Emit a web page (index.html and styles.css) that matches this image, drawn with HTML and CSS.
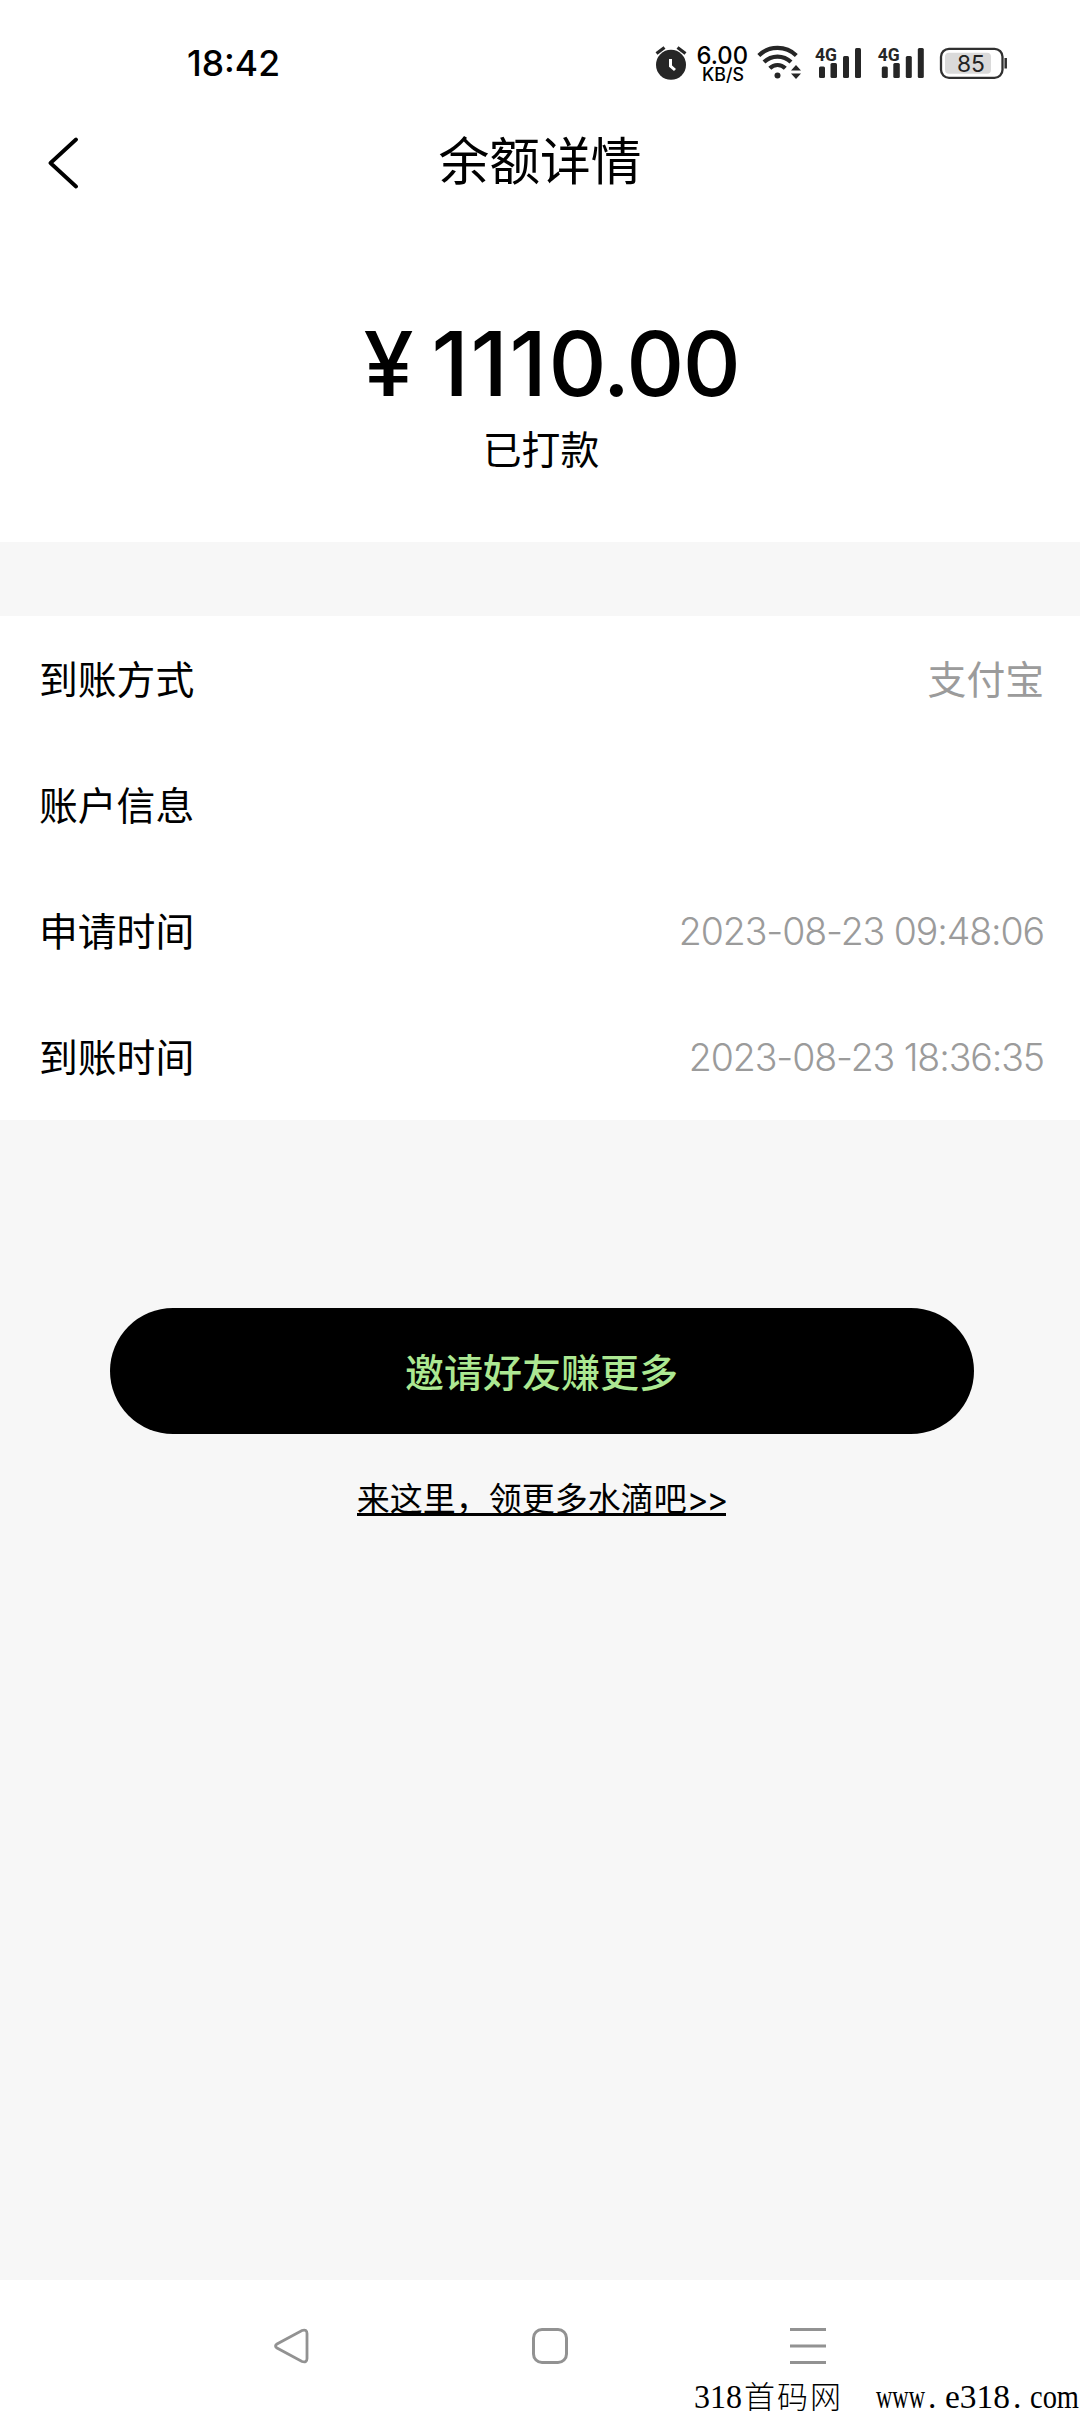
FILE: index.html
```html
<!DOCTYPE html>
<html lang="zh-CN">
<head>
<meta charset="utf-8">
<title>余额详情</title>
<link rel="stylesheet" href="styles.css">
</head>
<body>
<div class="screen">
  <div class="status-bar">
    <span class="clock">18:42</span>
    <svg class="status-icons" width="380" height="70" viewBox="0 0 380 70">
      <g fill="#262626">
        <circle cx="31" cy="34.8" r="15"/>
        <path d="M16.5 23.5l8-6M45.500 23.500l-8-6" stroke="#262626" stroke-width="3.200"/>
        <path d="M30.500 29v7l4.500 4" fill="none" stroke="#fff" stroke-width="3"/>
        <circle cx="137.500" cy="45.500" r="3"/>
        <g fill="none" stroke="#262626" stroke-width="4.200">
          <path d="M118.800 25.500a27 27 0 0 1 37.500 0"/>
          <path d="M124 32a19.500 19.500 0 0 1 27 0"/>
          <path d="M129.800 38.200a11 11 0 0 1 15.500 0"/>
        </g>
        <path d="M151 40.500l5-5.500 5 5.500zM151 43.500l5 5.500 5-5.500z"/>
        <g id="signal">
          <rect x="179" y="36.500" width="6" height="11.500" rx="1.500"/>
          <rect x="190.500" y="33" width="6.500" height="15" rx="1.500"/>
          <rect x="203" y="26" width="6" height="22" rx="1.500"/>
          <rect x="215" y="18" width="6" height="30" rx="1.500"/>
          <text class="network" x="175" y="31" textLength="22" lengthAdjust="spacingAndGlyphs">4G</text>
        </g>
        <use href="#signal" x="62.800"/>
      </g>
      <text class="speed" x="56.500" y="34" textLength="51.500" lengthAdjust="spacingAndGlyphs">6.00</text>
      <text class="unit" x="62" y="51" textLength="42" lengthAdjust="spacingAndGlyphs">KB/S</text>
      <rect x="301" y="18.800" width="61.500" height="29" rx="8" fill="#fff" stroke="#303030" stroke-width="2.300"/>
      <rect x="305" y="22.800" width="46" height="21" rx="4" fill="#dadada"/>
      <path d="M365.700 28v10.500" stroke="#303030" stroke-width="2.500"/>
      <text class="battery" x="317" y="41.500" textLength="28" lengthAdjust="spacingAndGlyphs">85</text>
    </svg>
  </div>
  <header class="header">
    <svg class="back" width="32" height="56" viewBox="0 0 32 56"><path d="M28 4.500L2.500 28 28 51.500" fill="none" stroke="#000" stroke-width="3.800" stroke-linecap="round" stroke-linejoin="round"/></svg>
    <h1 class="title">余额详情</h1>
  </header>
  <section class="summary">
    <div class="amount"><span class="currency">¥</span><span class="value"><span class="ones">111</span><span class="zeros">0.00</span></span></div>
    <div class="state">已打款</div>
  </section>
  <section class="details">
    <div class="row"><span>到账方式</span><span class="info">支付宝</span></div>
    <div class="row"><span>账户信息</span></div>
    <div class="row"><span>申请时间</span><span class="info date">2023-08-23 09:48:06</span></div>
    <div class="row"><span>到账时间</span><span class="info date">2023-08-23 18:36:35</span></div>
  </section>
  <main class="actions">
    <div class="invite">邀请好友赚更多</div>
    <div class="more">来这里，领更多水滴吧<span class="arrows">&gt;&gt;</span></div>
  </main>
  <nav class="nav">
    <svg width="36" height="38" viewBox="0 0 36 38"><path d="M3 17Q0 19 3 21L28 34.500Q33 36 33 31.500V6.500Q33 2 28 3.500Z" fill="none" stroke="#929292" stroke-width="2.800"/></svg>
    <svg width="36" height="36" viewBox="0 0 36 36"><rect x="1.500" y="1.500" width="33" height="33" rx="8.500" fill="none" stroke="#929292" stroke-width="3"/></svg>
    <svg width="36" height="36" viewBox="0 0 36 36"><path d="M0 1.500h36M0 18h36M0 34.500h36" stroke="#929292" stroke-width="3"/></svg>
  </nav>
  <svg class="watermark" width="390" height="36" viewBox="0 0 390 36">
    <text x="4" y="32" textLength="48" lengthAdjust="spacingAndGlyphs">318</text>
    <text class="site-name" x="54" y="32" textLength="97">首码网</text>
    <text x="186" y="32" textLength="49" lengthAdjust="spacingAndGlyphs">www</text>
    <text x="238" y="32">.</text>
    <text x="255" y="32" textLength="65" lengthAdjust="spacingAndGlyphs">e318</text>
    <text x="323" y="32">.</text>
    <text x="340" y="32" textLength="49" lengthAdjust="spacingAndGlyphs">com</text>
  </svg>
</div>
</body>
</html>
```
FILE: styles.css
```css
* { box-sizing: border-box; }
body { margin: 0; background: #f7f7f7; }
.screen {
  position: relative;
  display: flex;
  flex-direction: column;
  width: 1080px;
  height: 2412px;
  overflow: hidden;
  color: #000;
  font-family: Inter, "Noto Sans CJK SC", sans-serif;
  font-size: 38.8px;
}
.status-bar {
  display: flex;
  justify-content: space-between;
  align-items: center;
  height: 128px;
  padding: 2px 60px 0 187px;
  background: #fff;
}
.clock { padding-bottom: 3px; font-size: 35.5px; font-weight: 500; line-height: 44px; }
.speed { font: 500 24px Inter, sans-serif; }
.unit { font: 500 18px Inter, sans-serif; }
.network { font: 700 19px "Roboto", sans-serif; }
.battery { font: 400 23px Inter, sans-serif; fill: #222; }
.header {
  display: grid;
  grid-template-columns: 100px 1fr 100px;
  align-items: center;
  height: 68px;
  background: #fff;
}
.back { margin: 2px 0 0 48px; }
.title {
  margin: 0;
  font-size: 50.8px;
  font-weight: 400;
  line-height: 68px;
  text-align: center;
}
.summary {
  display: flex;
  flex-direction: column;
  align-items: center;
  height: 346px;
  padding-top: 113px;
  background: #fff;
}
.amount {
  display: flex;
  gap: 18px;
  padding-left: 23px;
  font-size: 90px;
  font-weight: 500;
  line-height: 110px;
}
.ones { letter-spacing: 1.6px; }
.zeros { letter-spacing: -1.4px; }
.state { padding-left: 2px; line-height: 61px; }
.details { margin-top: 74px; padding: 0 36px 0 39px; background: #fff; }
.row {
  display: flex;
  justify-content: space-between;
  align-items: center;
  height: 126px;
  padding-bottom: 4px;
}
.info { color: #9b9b9b; }
.date {
  padding-top: 4px;
  font-size: 37.5px;
  font-weight: 300;
  letter-spacing: -1.1px;
}
.actions {
  display: flex;
  flex: 1;
  flex-direction: column;
  align-items: center;
  gap: 40px;
  padding: 188px 0 0 3px;
}
.invite {
  width: 864px;
  height: 126px;
  border-radius: 63px;
  background: #000;
  color: #ace892;
  font-size: 39px;
  font-weight: 500;
  line-height: 129px;
  text-align: center;
}
.more {
  height: 42px;
  border-bottom: 3px solid #000;
  font-size: 33px;
  line-height: 51px;
}
.arrows { letter-spacing: -2.2px; }
.nav {
  display: flex;
  justify-content: space-between;
  align-items: center;
  height: 132px;
  padding: 0 254px 0 274px;
  background: #fff;
}
.watermark {
  position: absolute;
  right: 0;
  bottom: 0;
  font: 33.5px "Liberation Serif", serif;
}
.site-name { font: 300 31px "Noto Sans CJK SC", sans-serif; }
```
